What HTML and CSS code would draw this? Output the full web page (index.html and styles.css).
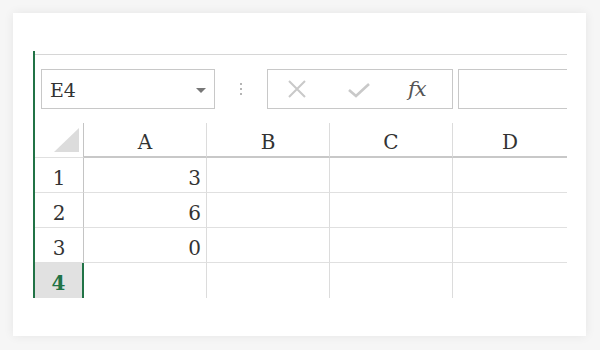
FILE: index.html
```html
<!DOCTYPE html>
<html>
<head>
<link rel="stylesheet" href="styles.css">
</head>
<body>
<div class="card">
<div class="sheet">

<!--formula bar-->
<div class="toolbar">
	<div class="namebox">
		<span class="cell-ref">E4</span>
		<span class="caret"></span>
	</div>
	<div class="grip"><i></i><i></i><i></i></div>
	<div class="fx-buttons">
		<svg class="icon-cancel" width="20" height="18" viewBox="0 0 20 18">
			<path d="M2 1 L18 17 M18 1 L2 17" stroke="#c9c9c9" stroke-width="2" fill="none"/>
		</svg>
		<svg class="icon-enter" width="22" height="15" viewBox="0 0 22 15">
			<path d="M1 7 L8 13 L21 1" stroke="#c9c9c9" stroke-width="2.6" fill="none"/>
		</svg>
		<span class="fx">fx</span>
	</div>
	<div class="formula-input"></div>
</div>

<!--cells-->
<div class="grid">
	<div class="corner"><span class="tri"></span></div>
	<div class="col-head">A</div>
	<div class="col-head">B</div>
	<div class="col-head">C</div>
	<div class="col-head last">D</div>

	<div class="row-head">1</div>
	<div class="cell num">3</div>
	<div class="cell"></div>
	<div class="cell"></div>
	<div class="cell last"></div>

	<div class="row-head">2</div>
	<div class="cell num">6</div>
	<div class="cell"></div>
	<div class="cell"></div>
	<div class="cell last"></div>

	<div class="row-head">3</div>
	<div class="cell num">0</div>
	<div class="cell"></div>
	<div class="cell"></div>
	<div class="cell last"></div>

	<div class="row-head active bottom">4</div>
	<div class="cell bottom"></div>
	<div class="cell bottom"></div>
	<div class="cell bottom"></div>
	<div class="cell last bottom"></div>
</div>

</div>
</div>
</body>
</html>
```
FILE: styles.css
```css
body {
	margin: 0;
	background-color: #f6f6f6;
	font-family: "DejaVu Serif", serif;
	color: #333333;
}
.card {
	margin: 13px;
	width: 573px;
	height: 323px;
	box-sizing: border-box;
	padding: 38px 0 0 20px;
	background-color: #ffffff;
	box-shadow: 0 0 10px rgba(0, 0, 0, 0.07);
}
.sheet {
	width: 534px;
	box-sizing: border-box;
	padding-top: 3px;
	border-left: 2px solid #217346;
}

/* formula bar */
.toolbar {
	display: flex;
	align-items: center;
	border-top: 1px solid #d6d6d6;
	padding-top: 14px;
	margin-bottom: 14px;
}
.namebox {
	display: flex;
	align-items: center;
	justify-content: space-between;
	width: 174px;
	height: 40px;
	box-sizing: border-box;
	margin-left: 6px;
	padding: 1px 8px 0 8px;
	border: 1px solid #c8c8c8;
	font-size: 19px;
}
.caret {
	width: 0;
	height: 0;
	border-left: 5px solid transparent;
	border-right: 5px solid transparent;
	border-top: 5px solid #777777;
	margin-top: 1px;
}
.grip {
	display: flex;
	flex-direction: column;
	gap: 3px;
	width: 52px;
	align-items: center;
}
.grip i {
	width: 2px;
	height: 2px;
	background-color: #b5b5b5;
}
.fx-buttons {
	display: flex;
	align-items: center;
	width: 186px;
	height: 40px;
	box-sizing: border-box;
	border: 1px solid #c8c8c8;
}
.icon-cancel {
	margin-left: 19px;
}
.icon-enter {
	margin-left: 41px;
	margin-top: 3px;
}
.fx {
	margin-left: 38px;
	font-style: italic;
	font-size: 21px;
	color: #555555;
	letter-spacing: -1px;
}
.formula-input {
	flex: 1;
	height: 40px;
	box-sizing: border-box;
	margin-left: 5px;
	border: 1px solid #c8c8c8;
	border-right: none;
}

/* cells */
.grid {
	display: grid;
	grid-template-columns: 49px 123px 123px 123px 114px;
	grid-auto-rows: 35px;
	font-size: 20px;
}
.grid > div {
	box-sizing: border-box;
	border-right: 1px solid #dcdcdc;
	border-bottom: 1px solid #e0e0e0;
	display: flex;
	align-items: center;
	padding-top: 5px;
}
.grid > div.last {
	border-right: none;
}
.grid > div.bottom {
	border-bottom: none;
}
.corner {
	position: relative;
	border-right-color: #c4c4c4 !important;
}
.tri {
	position: absolute;
	right: 4px;
	bottom: 5px;
	width: 0;
	height: 0;
	border-left: 25px solid transparent;
	border-bottom: 24px solid #dcdcdc;
}
.col-head {
	justify-content: center;
	border-bottom: 2px solid #c8c8c8 !important;
}
.row-head {
	justify-content: center;
	border-right-color: #c4c4c4 !important;
}
.row-head.active {
	background-color: #e1e1e1;
	border-right: 2px solid #217346 !important;
	color: #217346;
	font-weight: bold;
}
.num {
	justify-content: flex-end;
	padding-right: 5px;
}
```
